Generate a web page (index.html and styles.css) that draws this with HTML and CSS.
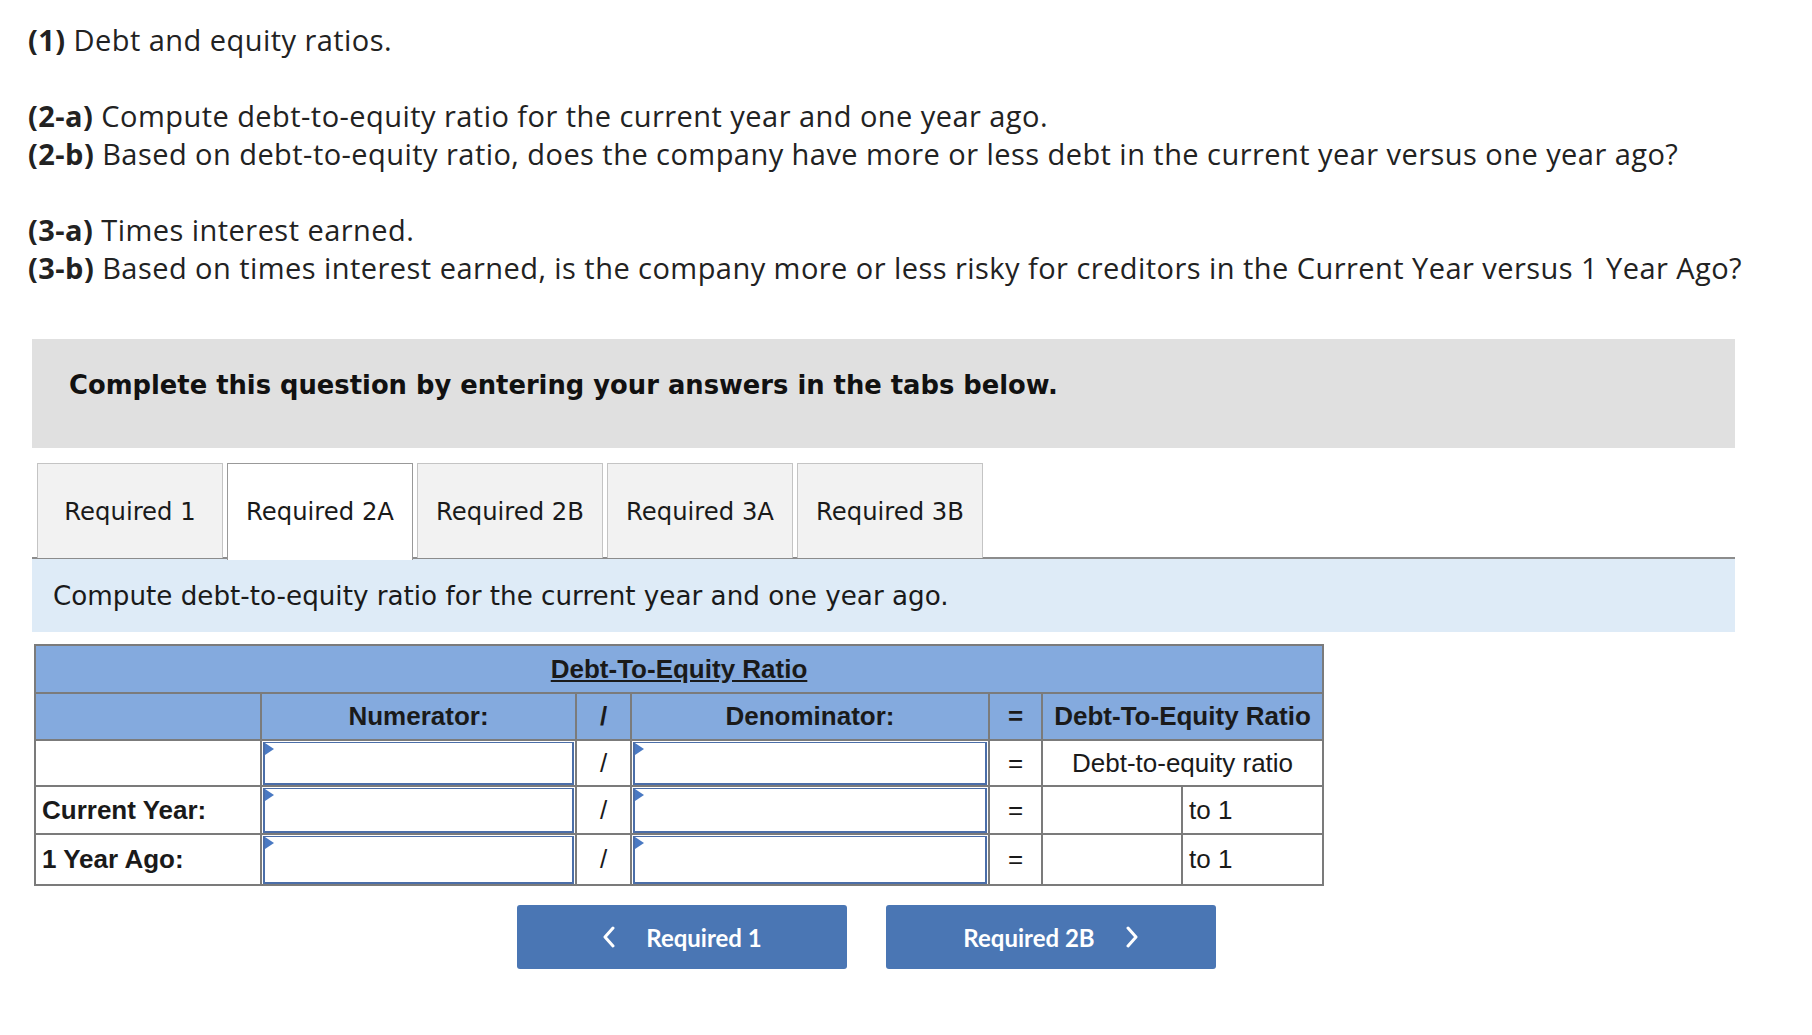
FILE: index.html
```html
<!DOCTYPE html>
<html>
<head>
<meta charset="utf-8">
<link rel="stylesheet" href="styles.css">
</head>
<body>
<div class="page">
  <div class="intro">
    <p><b>(1)</b> Debt and equity ratios.</p>
    <p><b>(2-a)</b> Compute debt-to-equity ratio for the current year and one year ago.<br><b>(2-b)</b> Based on debt-to-equity ratio, does the company have more or less debt in the current year versus one year ago?</p>
    <p><b>(3-a)</b> Times interest earned.<br><b>(3-b)</b> Based on times interest earned, is the company more or less risky for creditors in the Current Year versus 1 Year Ago?</p>
  </div>

  <div class="notice">Complete this question by entering your answers in the tabs below.</div>

  <div class="tabs">
    <div class="tab">Required 1</div>
    <div class="tab active">Required 2A</div>
    <div class="tab">Required 2B</div>
    <div class="tab">Required 3A</div>
    <div class="tab">Required 3B</div>
  </div>

  <div class="panel">Compute debt-to-equity ratio for the current year and one year ago.</div>

  <table class="grid">
    <colgroup>
      <col class="c-label"><col class="c-num"><col class="c-op"><col class="c-den"><col class="c-eq"><col class="c-val"><col class="c-to">
    </colgroup>
    <tr class="title-row"><th colspan="7"><span class="u">Debt-To-Equity Ratio</span></th></tr>
    <tr class="head-row">
      <th></th><th>Numerator:</th><th>/</th><th>Denominator:</th><th>=</th><th colspan="2">Debt-To-Equity Ratio</th>
    </tr>
    <tr class="r1">
      <td></td>
      <td class="inp"><div class="box"></div></td>
      <td class="op">/</td>
      <td class="inp"><div class="box"></div></td>
      <td class="op">=</td>
      <td colspan="2" class="center">Debt-to-equity ratio</td>
    </tr>
    <tr class="r2">
      <td class="lbl">Current Year:</td>
      <td class="inp"><div class="box"></div></td>
      <td class="op">/</td>
      <td class="inp"><div class="box"></div></td>
      <td class="op">=</td>
      <td></td>
      <td class="to">to 1</td>
    </tr>
    <tr class="r3">
      <td class="lbl">1 Year Ago:</td>
      <td class="inp"><div class="box"></div></td>
      <td class="op">/</td>
      <td class="inp"><div class="box"></div></td>
      <td class="op">=</td>
      <td></td>
      <td class="to">to 1</td>
    </tr>
  </table>

  <div class="nav">
    <button class="btn"><svg class="chev" width="14" height="22" viewBox="0 0 14 22"><path d="M11 2 L3 11 L11 20" fill="none" stroke="#fff" stroke-width="3" stroke-linecap="round" stroke-linejoin="round"/></svg><span>Required 1</span></button>
    <button class="btn"><span>Required 2B</span><svg class="chev" width="14" height="22" viewBox="0 0 14 22"><path d="M3 2 L11 11 L3 20" fill="none" stroke="#fff" stroke-width="3" stroke-linecap="round" stroke-linejoin="round"/></svg></button>
  </div>
</div>
</body>
</html>
```

FILE: styles.css
```css
html, body {
  margin: 0;
  padding: 0;
  background: #fff;
}

.page {
  width: 1812px;
}

.intro {
  padding: 21px 0 0 28px;
  font-family: "Open Sans", "Lato", sans-serif;
  font-size: 29px;
  letter-spacing: 0.45px;
  line-height: 38px;
  color: #222;
}

.intro p {
  margin: 0 0 38px 0;
}

.intro p:last-child {
  margin-bottom: 0;
}

.intro b {
  font-weight: 700;
}

.notice {
  margin: 52px 0 0 32px;
  width: 1703px;
  height: 109px;
  box-sizing: border-box;
  padding: 30px 0 0 37px;
  background: #e0e0e0;
  font-family: "DejaVu Sans", Verdana, sans-serif;
  font-weight: bold;
  font-size: 25.8px;
  line-height: 32px;
  color: #111;
}

.tabs {
  margin: 15px 0 0 32px;
  width: 1703px;
  display: flex;
  gap: 4px;
  padding-left: 5px;
  box-sizing: border-box;
  border-bottom: 2px solid #8c8c8c;
  height: 96px;
}

.tab {
  width: 186px;
  height: 95px;
  box-sizing: border-box;
  border: 1px solid #c4c4c4;
  border-bottom: none;
  background: #f2f2f2;
  display: flex;
  align-items: center;
  justify-content: center;
  font-family: "DejaVu Sans", Verdana, sans-serif;
  font-size: 24.3px;
  color: #1a1a1a;
}

.tab.active {
  background: #fff;
  border: 1px solid #999;
  border-bottom: none;
  height: 97px;
  padding-bottom: 2px;
  position: relative;
  z-index: 1;
}

.panel {
  margin: 0 0 0 32px;
  width: 1703px;
  height: 73px;
  box-sizing: border-box;
  padding-left: 21px;
  display: flex;
  align-items: center;
  background: #deebf7;
  font-family: "DejaVu Sans", Verdana, sans-serif;
  font-size: 26.2px;
  color: #1a1a1a;
}

.grid {
  margin: 12px 0 0 34px;
  border-collapse: collapse;
  width: 1288px;
  table-layout: fixed;
  font-family: "Liberation Sans", Arial, sans-serif;
  font-size: 26px;
  color: #1a1a1a;
}

.c-label { width: 226px; }
.c-num { width: 315px; }
.c-op { width: 55px; }
.c-den { width: 358px; }
.c-eq { width: 53px; }
.c-val { width: 140px; }
.c-to { width: 141px; }

.grid th, .grid td {
  border: 2px solid #7b7b7b;
  padding: 0;
}

.grid th {
  background: #84aade;
  font-weight: bold;
  text-align: center;
}

.title-row th { height: 46px; }
.head-row th { height: 45px; }

.u {
  text-decoration: underline;
}

.r1 td { height: 44px; }
.r2 td { height: 46px; }
.r3 td { height: 49px; }

.lbl {
  font-weight: bold;
  padding-left: 6px !important;
}

.op {
  text-align: center;
}

.center {
  text-align: center;
}

.to {
  padding-left: 6px !important;
}

.inp {
  position: relative;
  vertical-align: top;
}

.box {
  position: absolute;
  left: 1px;
  right: 1px;
  top: 1px;
  bottom: 0;
  border: 2px solid #4b6ea8;
  border-top-width: 1px;
  background: #fff;
}

.box::before {
  content: "";
  position: absolute;
  left: 0;
  top: 0;
  border-top: 6px solid transparent;
  border-bottom: 6px solid transparent;
  border-left: 9px solid #4a79c2;
}

.nav {
  display: flex;
  gap: 39px;
  margin: 19px 0 0 517px;
}

.btn {
  width: 330px;
  height: 64px;
  border: none;
  border-radius: 3px;
  background: #4a76b4;
  color: #fff;
  display: flex;
  align-items: center;
  justify-content: center;
  gap: 30px;
  font-family: "Lato", "Open Sans", sans-serif;
  font-weight: bold;
  font-size: 24px;
  padding: 0;
}
```
